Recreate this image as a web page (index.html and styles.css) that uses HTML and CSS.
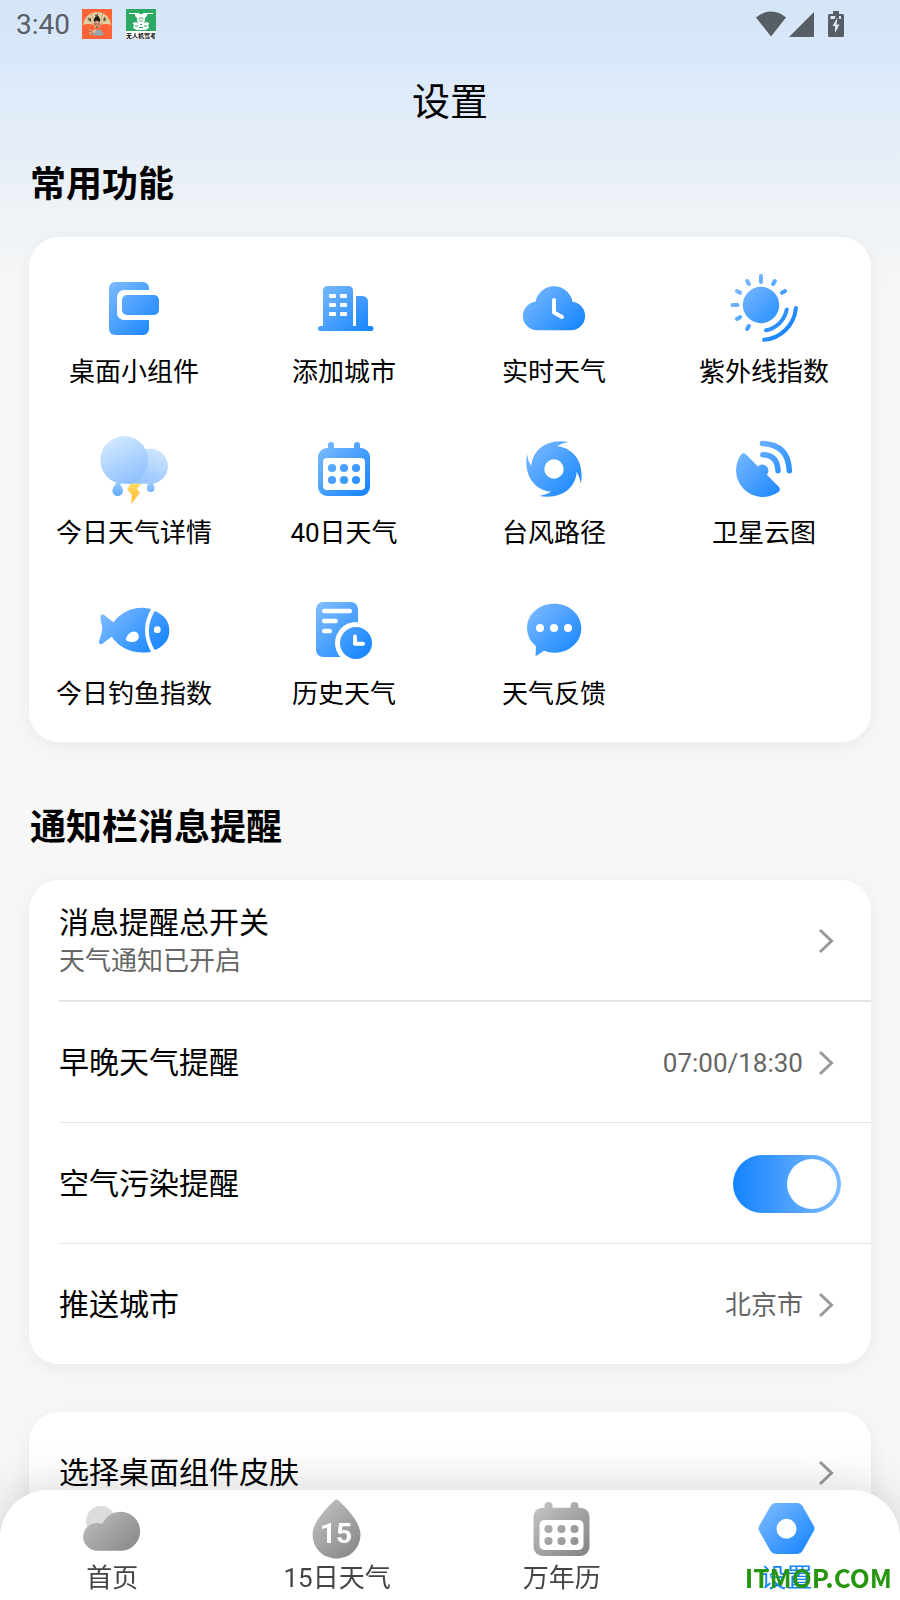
FILE: index.html
```html
<!DOCTYPE html>
<html lang="zh-CN">
<head>
<meta charset="utf-8">
<meta name="viewport" content="width=device-width, initial-scale=1">
<title>设置</title>
<link rel="stylesheet" href="styles.css">
</head>
<body>
<svg class="defs" aria-hidden="true">
  <defs>
    <linearGradient id="blue" gradientUnits="userSpaceOnUse" x1="10" y1="10" x2="62" y2="62"><stop offset="0" stop-color="#80bcff"/><stop offset="1" stop-color="#1283ff"/></linearGradient>
    <linearGradient id="blue-box" x1="0" y1="0" x2="1" y2="1"><stop offset="0" stop-color="#80bcff"/><stop offset="1" stop-color="#1283ff"/></linearGradient>
    <linearGradient id="gray" gradientUnits="userSpaceOnUse" x1="6" y1="6" x2="52" y2="56"><stop offset="0" stop-color="#c2c2c2"/><stop offset="1" stop-color="#868686"/></linearGradient>
    <linearGradient id="cloud-front" x1="0.2" y1="0" x2="0.7" y2="1"><stop offset="0" stop-color="#d6eaff"/><stop offset="1" stop-color="#8cc0ff"/></linearGradient>
    <linearGradient id="cloud-back" x1="0.7" y1="0" x2="0.3" y2="1"><stop offset="0" stop-color="#d0e6ff"/><stop offset="1" stop-color="#94c4ff"/></linearGradient>
    <linearGradient id="rain" x1="0" y1="0" x2="0" y2="1"><stop offset="0" stop-color="#a6d0ff"/><stop offset="1" stop-color="#5ca9ff"/></linearGradient>
    <linearGradient id="bolt" x1="0" y1="0" x2="0" y2="1"><stop offset="0" stop-color="#ffde63"/><stop offset="1" stop-color="#ffb52b"/></linearGradient>
  </defs>
</svg>

<div class="status-bar">
  <div class="status-left">
    <span class="clock">3:40</span>
    <svg class="app-badge" viewBox="0 0 30 30" aria-hidden="true">
      <rect width="30" height="30" fill="#ff6336"/>
      <path d="M1 16C2 8 8 3 15 3S28 8 29 16C24 14 19 15 15 17C11 15 6 14 1 16Z" fill="#e2cfa0"/>
      <path d="M4 9L13 16M9 5L14 16M15 3V14M21 5L17 15M26 9L18 16" stroke="#b99b6c" stroke-width=".7"/>
      <path d="M6 9L9 12M7 12L9 9M13 6L17 8M14 8L16 5M21 10L24 11M22 12L23 8" stroke="#5b4a35" stroke-width="1.1"/>
      <path d="M12 10L15 8L18 10V19H12Z" fill="#d99a78"/>
      <path d="M12 13V10L13.500 7.500H16.500L18 10V13L15 11.500Z" fill="#20191a"/>
      <path d="M12.500 15H14.500M15.500 15H17.500M14 18H16.500" stroke="#47291f" stroke-width=".8"/>
      <path d="M10 26L13 20L15 21L18 20L22 25L19 27Z" fill="#9aa4ad"/>
      <path d="M7 20L10 22L13 20L14 22L12 25L8 26Z" fill="#ebb896"/>
      <path d="M7 22L10 23M9 25L12 24" stroke="#714b3c" stroke-width=".8"/>
    </svg>
    <svg class="app-badge second" viewBox="0 0 30 30" aria-hidden="true">
      <rect width="30" height="30" fill="#fff"/>
      <rect width="30" height="22" fill="#2ca963"/>
      <path d="M3 4.500H13M17 4.500H27" stroke="#fff" stroke-width="1"/>
      <path d="M9 5H21V7L19 9H11L9 7Z" fill="#fff"/>
      <circle cx="15" cy="10.500" r="4" fill="#fff"/>
      <path d="M12.500 10.500Q15 7 17.500 10.500M13.500 12H16.500" fill="none" stroke="#2ca963"/>
      <path d="M6.500 14L10 13L12 14H18L20 13L23.500 14L22 16.500L23 19L19.500 21H10.500L7 19L8 16.500Z" fill="#fff"/>
      <path d="M9 17H12M18 17H21M13 18.500H17M14 15.500H16" stroke="#2ca963" stroke-width="1"/>
      <text x="15" y="29" text-anchor="middle" class="badge-text">无人机驾考</text>
    </svg>
  </div>
  <div class="status-right">
    <svg width="30" height="26" viewBox="0 0 30 26" aria-hidden="true"><path d="M0 6.500Q6.500 .500 15 .500T30 6.500L15 25.500Z" fill="#575e66"/></svg>
    <svg width="25" height="25" viewBox="0 0 25 25" aria-hidden="true"><path d="M25 0V25H0Z" fill="#575e66"/></svg>
    <svg class="battery" width="16" height="26" viewBox="0 0 16 26" aria-hidden="true"><path d="M5 0H11V3H14.500Q16 3 16 4.500V24.500Q16 26 14.500 26H1.500Q0 26 0 24.500V4.500Q0 3 1.500 3H5Z" fill="#575e66"/><path d="M9.500 6.500L4.500 15H7V22L11.500 13.500H8.500ZM2.500 5H7.500L6.500 8H2.500ZM11 5H13V8H11Z" fill="#dbe9f8"/></svg>
  </div>
</div>

<header class="page-header"><h1>设置</h1></header>

<main>
  <section>
    <h2>常用功能</h2>
    <div class="card tools">
      <a class="tool" href="#widget">
        <svg viewBox="0 0 72 72" aria-hidden="true"><rect x="11" y="10" width="40" height="53" rx="6" fill="url(#blue)"/><rect x="19" y="18" width="50" height="30" rx="7" fill="#fff"/><rect x="24" y="23" width="37" height="20" rx="5" fill="url(#blue)"/></svg>
        <span>桌面小组件</span>
      </a>
      <a class="tool" href="#city">
        <svg viewBox="0 0 72 72" aria-hidden="true"><path fill="url(#blue)" d="M15 54V19Q15 14 20 14H40Q45 14 45 19V54H48V24H54Q60 24 60 30V54H63Q65.500 54 65.500 56.500T63 59H12.500Q10 59 10 56.500T12.500 54Z"/><g fill="#fff"><rect x="21" y="22" width="7" height="4" rx="1"/><rect x="32" y="22" width="7" height="4" rx="1"/><rect x="21" y="31" width="7" height="4" rx="1"/><rect x="32" y="31" width="7" height="4" rx="1"/><rect x="21" y="40" width="7" height="4" rx="1"/><rect x="32" y="40" width="7" height="4" rx="1"/></g></svg>
        <span>添加城市</span>
      </a>
      <a class="tool" href="#realtime">
        <svg viewBox="0 0 72 72" aria-hidden="true"><path fill="url(#blue)" d="M19 58.300A14.300 14.300 0 0 1 17.500 29.800A18.800 18.800 0 0 1 54.500 29.800A14.300 14.300 0 0 1 53 58.300Z"/><path d="M36 28V40.500L44 45" fill="none" stroke="#fff" stroke-width="4" stroke-linecap="round" stroke-linejoin="round"/></svg>
        <span>实时天气</span>
      </a>
      <a class="tool" href="#uv">
        <svg viewBox="0 0 72 72" aria-hidden="true"><circle cx="33" cy="33" r="18.200" fill="url(#blue)"/><path transform="translate(.5)" fill="none" stroke="url(#blue)" stroke-width="4" stroke-linecap="round" d="M32.501 4L32.499 10M46.300 9L44.700 12M56.500 19L53.500 20.800M18.700 9L20.300 12M8.500 19L11.500 20.800M4 33.001L9 32.999M11.500 45.200L8.500 47M20.300 54L18.700 57M58.200 37.500A26 26 0 0 1 37.500 58.300M67.400 36A35 35 0 0 1 35.500 67.800"/></svg>
        <span>紫外线指数</span>
      </a>
      <a class="tool" href="#today">
        <svg viewBox="0 0 72 72" aria-hidden="true"><path fill="url(#cloud-back)" d="M30 50.700L46 17A17.500 17.500 0 1 1 54 50.700Z"/><path fill="url(#cloud-front)" d="M22 50.700A24 24 0 1 1 41 46Q37 50.700 33 50.700Z"/><path fill="url(#rain)" d="M19.700 48Q25 54.500 25 57.800A5.300 5.300 0 0 1 14.400 57.800Q14.400 54.500 19.700 48ZM52.700 47.500Q56.600 52 56.600 55A3.900 3.900 0 0 1 48.800 55Q48.800 52 52.700 47.500Z"/><path fill="url(#bolt)" d="M32.700 50.700H43.300L39 56L42 59.500L33.300 71L34 61.700L29 56.500Z"/></svg>
        <span>今日天气详情</span>
      </a>
      <a class="tool" href="#forty">
        <svg viewBox="0 0 72 72" aria-hidden="true"><g fill="url(#blue)"><rect x="10" y="15" width="52" height="48" rx="9"/><rect x="20" y="9" width="6" height="14" rx="3"/><rect x="46" y="9" width="6" height="14" rx="3"/></g><rect x="15" y="25" width="42" height="32" rx="4" fill="#fff"/><g fill="url(#blue)"><circle cx="24" cy="35" r="4.100"/><circle cx="36" cy="35" r="4.100"/><circle cx="48" cy="35" r="4.100"/><circle cx="24" cy="47" r="4.100"/><circle cx="36" cy="47" r="4.100"/><circle cx="48" cy="47" r="4.100"/></g></svg>
        <span>40日天气</span>
      </a>
      <a class="tool" href="#typhoon">
        <svg viewBox="-36 -36 72 72" aria-hidden="true"><path fill="url(#blue-box)" fill-rule="evenodd" d="M2.700-22.700C17-22 31-9 27 14.700Q26 8 22.700 2.700C22 17 9 31-14.700 27Q-8 26-2.700 22.700C-17 22-31 9-27-14.700Q-26-8-22.700-2.700C-22-17-9-31 14.700-27Q8-26 2.700-22.700ZM9.700 0A9.700 9.700 0 1 0-9.700 0A9.700 9.700 0 1 0 9.700 0Z"/></svg>
        <span>台风路径</span>
      </a>
      <a class="tool" href="#satellite">
        <svg viewBox="0 0 72 72" aria-hidden="true"><path fill="url(#blue)" d="M13.300 21.300Q15.500 19 18.100 21.500L30 33.400A5.800 5.800 0 1 1 38.800 41.700L51 54Q53 57 50.500 59A26.800 26.800 0 0 1 13.300 21.300Z"/><path fill="none" stroke="url(#blue)" stroke-width="5.500" stroke-linecap="round" d="M34.800 21.700Q49.500 22 50 37.700M34.500 10.400Q60.500 11.500 61.300 37.700"/></svg>
        <span>卫星云图</span>
      </a>
      <a class="tool" href="#fishing">
        <svg viewBox="0 0 72 72" aria-hidden="true"><path fill="url(#blue)" d="M3 21Q5 20 6.500 21.300L15.300 28.300C25 16 40 11 53 15.300Q41 36 53 57.700C38 61 22 55 13.700 42.700L4 50Q.500 51 1 47Q5 36 4 32Q1.500 23 3 21ZM56.700 17Q71.300 23 71.300 36.500T56.700 56Q45 37 56.700 17Z"/><circle cx="59.300" cy="35.700" r="3.400" fill="#fff"/><path fill="#fff" d="M27.700 44.500C31 38 35 36 39 38.500C42.500 42 41 48 34 48Q28 48 27.700 44.500Z"/></svg>
        <span>今日钓鱼指数</span>
      </a>
      <a class="tool" href="#history">
        <svg viewBox="0 0 72 72" aria-hidden="true"><rect x="8" y="8" width="42" height="55" rx="7" fill="url(#blue)"/><path d="M16.200 17H41.800M16.200 27H27.800M16.200 37H21.800" stroke="#fff" stroke-width="4.400" stroke-linecap="round"/><circle cx="48" cy="49" r="21" fill="#fff"/><circle cx="48" cy="49" r="16" fill="url(#blue)"/><path d="M47 42.500V49.800H55" fill="none" stroke="#fff" stroke-width="4" stroke-linecap="round" stroke-linejoin="round"/></svg>
        <span>历史天气</span>
      </a>
      <a class="tool" href="#feedback">
        <svg viewBox="0 0 72 72" aria-hidden="true"><path fill="url(#blue)" d="M36.200 9.700C51 9.700 63.300 20 63.300 34.200S51 58.700 36.200 58.700Q30 58.700 26 56.700L18.500 61.700Q17.500 62 17.500 61L18 52.300Q9 45 9 34.200C9 20 21 9.700 36.200 9.700Z"/><g fill="#fff"><circle cx="22" cy="34" r="4"/><circle cx="36" cy="34" r="4"/><circle cx="50" cy="34" r="4"/></g></svg>
        <span>天气反馈</span>
      </a>
    </div>
  </section>

  <section>
    <h2 class="spaced">通知栏消息提醒</h2>
    <ul class="card rows">
      <li class="strong-line">
        <a class="row" href="#switch">
          <span class="row-text"><span class="row-title">消息提醒总开关</span><span class="row-note">天气通知已开启</span></span>
          <svg class="chevron" viewBox="0 0 30 30" aria-hidden="true"><path d="M9 4L20.500 15L9 26"/></svg>
        </a>
      </li>
      <li>
        <a class="row" href="#daily">
          <span class="row-title">早晚天气提醒</span>
          <span class="row-value">07:00/18:30</span>
          <svg class="chevron" viewBox="0 0 30 30" aria-hidden="true"><path d="M9 4L20.500 15L9 26"/></svg>
        </a>
      </li>
      <li>
        <div class="row">
          <label class="row-title" for="air">空气污染提醒</label>
          <input class="toggle" type="checkbox" role="switch" id="air" checked>
        </div>
      </li>
      <li>
        <a class="row" href="#push-city">
          <span class="row-title">推送城市</span>
          <span class="row-value">北京市</span>
          <svg class="chevron" viewBox="0 0 30 30" aria-hidden="true"><path d="M9 4L20.500 15L9 26"/></svg>
        </a>
      </li>
    </ul>
  </section>

  <ul class="card rows more">
    <li>
      <a class="row" href="#skin">
        <span class="row-title">选择桌面组件皮肤</span>
        <svg class="chevron" viewBox="0 0 30 30" aria-hidden="true"><path d="M9 4L20.500 15L9 26"/></svg>
      </a>
    </li>
  </ul>
</main>

<nav class="tab-bar">
  <a class="tab" href="#home">
    <svg viewBox="0 0 60 60" aria-hidden="true"><circle cx="19" cy="22" r="15" fill="#dcdcdc"/><path fill="url(#gray)" d="M15.500 51.700A13.900 13.900 0 1 1 20.500 25A19.500 19.500 0 1 1 38 51.700Z"/></svg>
    <span>首页</span>
  </a>
  <a class="tab" href="#fifteen">
    <svg viewBox="0 0 60 60" aria-hidden="true"><path fill="url(#gray)" d="M27.500 1.500Q29.500-.500 31.500 1.500Q53.500 22 53.500 35.700A24 24 0 0 1 5.500 35.700Q5.500 22 27.500 1.500Z"/><text x="29" y="44" text-anchor="middle" class="drop-text">15</text></svg>
    <span>15日天气</span>
  </a>
  <a class="tab" href="#calendar">
    <svg viewBox="0 0 60 60" aria-hidden="true"><g fill="url(#gray)"><rect x="1.500" y="8.700" width="56" height="48.300" rx="9"/><rect x="12.500" y="3" width="8" height="14" rx="4"/><rect x="38.500" y="3" width="8" height="14" rx="4"/></g><rect x="7.500" y="21" width="44" height="30" rx="5" fill="#fff"/><g fill="url(#gray)"><circle cx="16.500" cy="30" r="4.100"/><circle cx="29.500" cy="30" r="4.100"/><circle cx="42.500" cy="30" r="4.100"/><circle cx="16.500" cy="42" r="4.100"/><circle cx="29.500" cy="42" r="4.100"/><circle cx="42.500" cy="42" r="4.100"/></g></svg>
    <span>万年历</span>
  </a>
  <a class="tab active" href="#settings" aria-current="page">
    <svg viewBox="0 0 60 60" aria-hidden="true"><path fill="url(#blue-box)" d="M18.500 4H40.500Q43.500 4 45.500 7L56.500 26.500Q58.500 29.500 56.500 32.500L45.500 52Q43.500 55 40.500 55H18.500Q15.500 55 13.500 52L2.500 32.500Q.500 29.500 2.500 26.500L13.500 7Q15.500 4 18.500 4Z"/><circle cx="29.500" cy="29.700" r="10" fill="#fff"/></svg>
    <span>设置</span>
  </a>
  <span class="site-mark">ITMOP.COM</span>
</nav>
</body>
</html>
```

FILE: styles.css
```css
* {
  box-sizing: border-box;
}

body {
  margin: 0;
  min-height: 100vh;
  padding-bottom: 60px;
  font-family: Roboto, "Noto Sans CJK SC", sans-serif;
  color: #000;
  background: #f7f7f7 linear-gradient(#d4e5f8 0, #dceafa 80px, #e6edf7 145px, #edf2f7 205px, #f7f7f7 290px) no-repeat;
}

a {
  color: inherit;
  text-decoration: none;
}

.defs {
  position: absolute;
  width: 0;
  height: 0;
}

.status-bar {
  display: flex;
  justify-content: space-between;
  align-items: center;
  height: 48px;
  padding: 0 56px 0 16px;
}

.status-left,
.status-right {
  display: flex;
  align-items: center;
}

.status-right {
  gap: 3px;
}

.battery {
  margin-left: 11px;
}

.clock {
  padding-top: 2px;
  margin-right: 12px;
  font-size: 28px;
  line-height: 32px;
  color: #575e66;
}

.app-badge {
  width: 30px;
  height: 30px;
}

.app-badge.second {
  margin-left: 14px;
}

.badge-text {
  font: bold 6px "Noto Sans CJK SC", sans-serif;
}

.page-header {
  display: flex;
  justify-content: center;
  align-items: center;
  height: 108px;
}

h1 {
  margin: 0;
  font-size: 38px;
  line-height: 54px;
  font-weight: 400;
}

main {
  padding: 0 29px;
}

h2 {
  margin: 4px 0 27px;
  padding-left: 1px;
  font-size: 36px;
  line-height: 50px;
  font-weight: 700;
}

h2.spaced {
  margin-top: 61px;
}

.card {
  margin: 0;
  background: #fff;
  border-radius: 30px;
  box-shadow: 0 4px 20px rgba(0, 0, 0, 0.06);
}

.tools {
  display: grid;
  grid-template-columns: repeat(4, 1fr);
  row-gap: 43px;
  padding: 35px 2px 30px 0;
}

.tool {
  display: flex;
  flex-direction: column;
  align-items: center;
  gap: 10px;
  font-size: 26px;
  line-height: 36px;
}

.tool svg {
  width: 72px;
  height: 72px;
}

.rows {
  list-style: none;
  padding: 0 0 0 30px;
}

.rows li + li {
  border-top: 1px solid #e4e4e4;
}

.rows .strong-line + li {
  border-top-width: 2px;
}

.row {
  display: flex;
  align-items: center;
  min-height: 120px;
  padding: 2px 30px 0 0;
}

.row-text {
  display: flex;
  flex-direction: column;
  flex: 1;
}

.row-title {
  flex: 1;
  font-size: 30px;
  line-height: 40px;
}

.row-note {
  font-size: 26px;
  line-height: 36px;
  color: #666;
}

.row-value {
  margin-right: 8px;
  font-size: 26px;
  line-height: 36px;
  color: #666;
}

.chevron {
  width: 30px;
  height: 30px;
  fill: none;
  stroke: #999;
  stroke-width: 3;
}

.toggle {
  appearance: none;
  display: flex;
  justify-content: flex-start;
  width: 108px;
  height: 58px;
  margin: 0;
  padding: 4px;
  border-radius: 29px;
  background: #d8d8d8;
}

.toggle:checked {
  justify-content: flex-end;
  background: linear-gradient(90deg, #1283ff, #80bcff);
}

.toggle::before {
  content: "";
  width: 50px;
  height: 50px;
  border-radius: 50%;
  background: #fff;
}

.more {
  margin-top: 48px;
}

.tab-bar {
  position: fixed;
  left: 0;
  right: 0;
  bottom: 0;
  display: grid;
  grid-template-columns: repeat(4, 1fr);
  padding: 9px 1px 4px 0;
  background: #fff;
  border-radius: 48px 48px 0 0;
  box-shadow: 0 0 50px rgba(0, 0, 0, 0.18);
}

.tab {
  display: flex;
  flex-direction: column;
  align-items: center;
  gap: 1px;
  font-size: 26px;
  line-height: 36px;
  color: #444;
}

.tab svg {
  width: 60px;
  height: 60px;
}

.tab.active {
  color: #1283ff;
}

.drop-text {
  font: bold 28px Roboto, sans-serif;
  fill: #fff;
}

.site-mark {
  position: absolute;
  right: 8px;
  bottom: 5px;
  font: bold 26px/36px "Noto Sans CJK SC", sans-serif;
  color: #26960f;
}
```
